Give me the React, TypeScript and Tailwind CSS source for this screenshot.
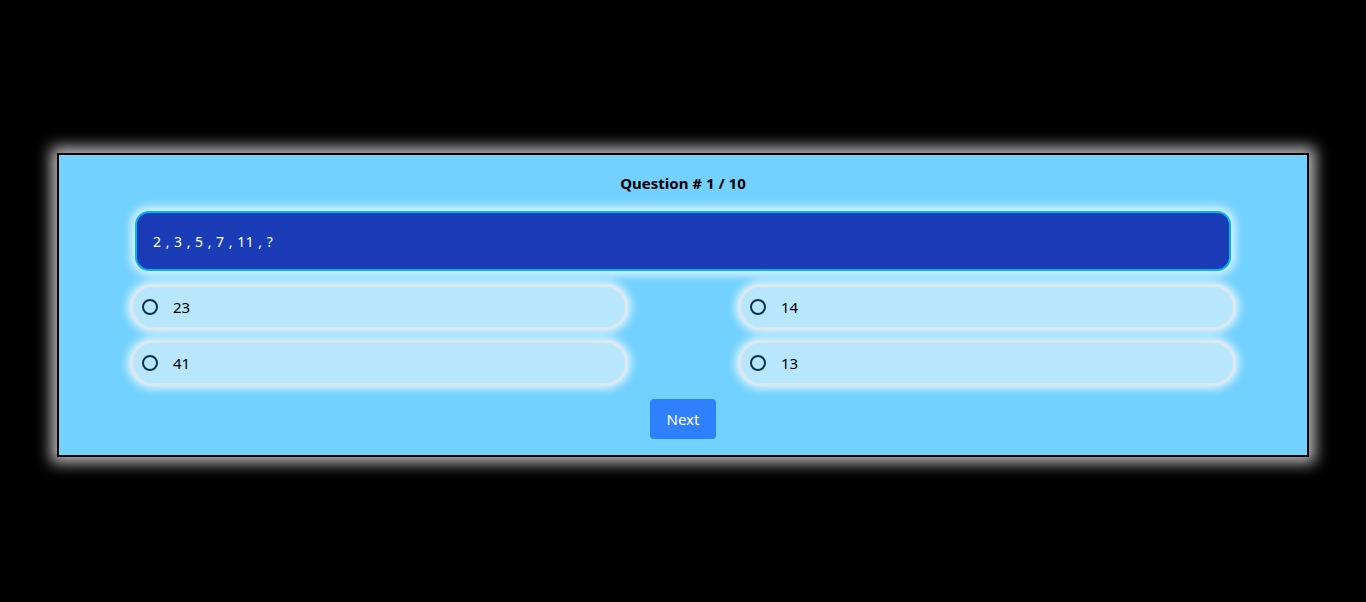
import React from "react";

const OPTIONS = ["23", "14", "41", "13"];

export default function App() {
  return (
    <div className="min-h-[602px] w-full bg-black pt-[153px]" style={{ fontFamily: '"Noto Sans", "Open Sans", sans-serif' }}>
      <div className="mx-auto w-[1252px] border-2 border-black bg-[#72d1fe] pt-[16px] pb-[16px] shadow-[0_0_14px_6px_rgba(220,220,220,0.85)]">
        {/* Title */}
        <h2 className="text-center text-[15px] font-bold leading-[24px] text-black">Question # 1 / 10</h2>

        {/* Question */}
        <div className="mx-[76px] mt-[16px] flex h-[60px] items-center rounded-[14px] border-2 border-[#00b3f5] bg-[#1a3cb6] px-[16px] shadow-[0_0_10px_4px_rgba(255,255,255,0.8)]">
          <span className="text-[14px] tracking-[0.5px] text-white">2 , 3 , 5 , 7 , 11 , ?</span>
        </div>

        {/* Options */}
        <div className="mx-[71px] mt-[13px] grid grid-cols-2 gap-x-[110px] gap-y-[10px]">
          {OPTIONS.map((opt) => (
            <label
              key={opt}
              className="flex h-[46px] cursor-pointer items-center gap-[9px] rounded-full border-[3px] border-[#dde8ee] bg-[#b8e6fc] pl-[9px] shadow-[0_0_8px_3px_rgba(255,255,255,0.75)]"
            >
              <span className="h-[16px] w-[16px] rounded-full border-2 border-[#0d3350]" />
              <span className="pl-[6px] text-[15px] text-black">{opt}</span>
            </label>
          ))}
        </div>

        {/* Next */}
        <div className="mt-[13px] flex justify-center">
          <button className="h-[40px] w-[66px] rounded-[4px] bg-[#2f7fff] text-[15px] text-white">Next</button>
        </div>
      </div>
    </div>
  );
}
